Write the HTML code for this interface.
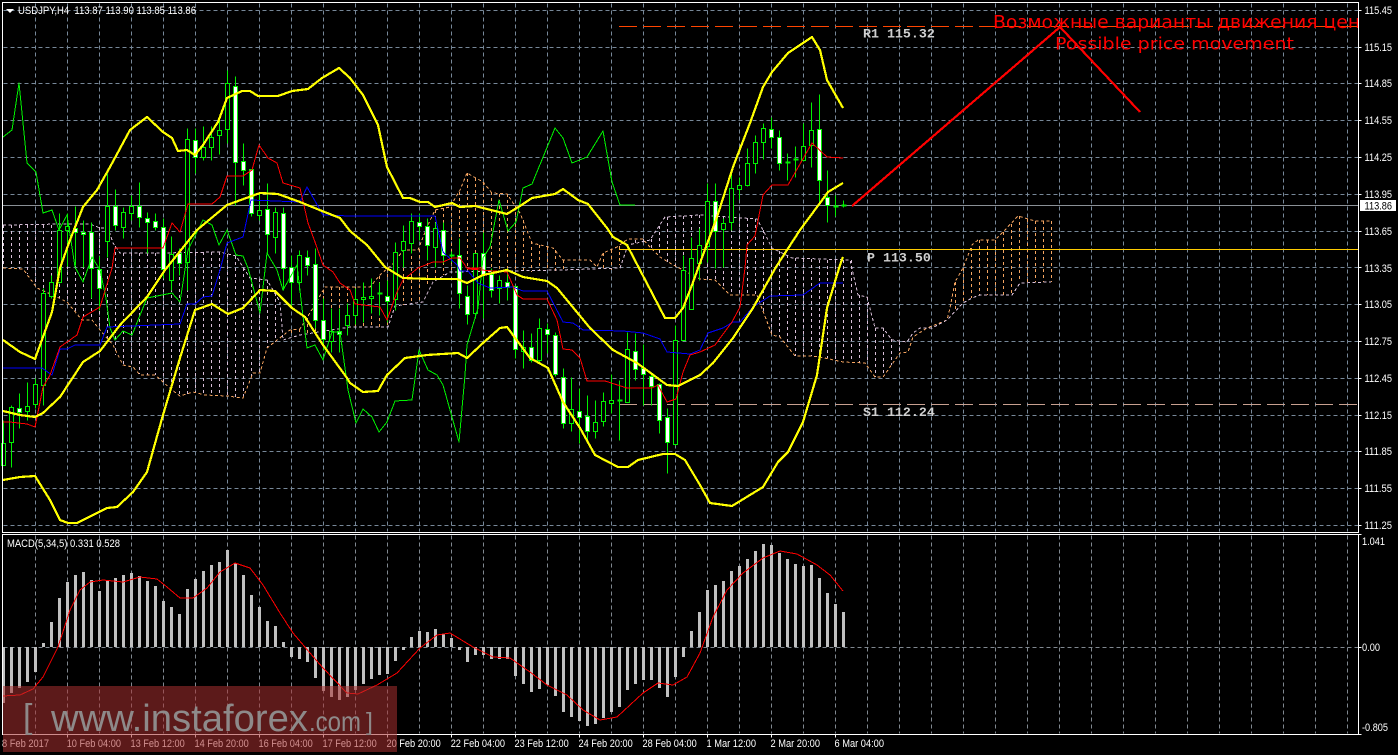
<!DOCTYPE html>
<html lang="ru"><head><meta charset="utf-8"><title>USDJPY,H4</title>
<style>
html,body{margin:0;padding:0;background:#000;width:1398px;height:755px;overflow:hidden}
svg{display:block;position:absolute;left:0;top:0}
text{font-family:"Liberation Sans","DejaVu Sans",sans-serif;font-size:11px;fill:#fff}
.m{font-family:"Liberation Mono",monospace;font-size:13.3px;font-weight:bold;fill:#d0d0d0}
.r{font-family:"DejaVu Sans","Liberation Sans",sans-serif;font-size:17px;fill:#f00}
.y{fill:none;stroke:#ff0;stroke-width:2.2;stroke-linejoin:round;shape-rendering:crispEdges}
.t{fill:none;stroke-width:1;stroke-linejoin:round;shape-rendering:crispEdges}
</style></head><body>
<svg width="1398" height="755" viewBox="0 0 1398 755" xmlns="http://www.w3.org/2000/svg">
<defs><clipPath id="c"><rect x="3" y="3" width="1355" height="529"/></clipPath></defs>
<rect width="1398" height="755" fill="#000"/>
<!-- grid -->
<g transform="translate(.5,.5)" shape-rendering="crispEdges" fill="none" stroke="#778899" stroke-dasharray="4 3">
<path d="M3 10H1358M3 47H1358M3 83H1358M3 120H1358M3 157H1358M3 194H1358M3 231H1358M3 267H1358M3 304H1358M3 341H1358M3 378H1358M3 415H1358M3 451H1358M3 488H1358M3 525H1358"/>
<path d="M35 3V531M67 3V531M99 3V531M131 3V531M163 3V531M195 3V531M227 3V531M259 3V531M291 3V531M323 3V531M355 3V531M387 3V531M419 3V531M451 3V531M483 3V531M515 3V531M547 3V531M579 3V531M611 3V531M643 3V531M675 3V531M707 3V531M739 3V531M771 3V531M803 3V531M835 3V531M867 3V531M899 3V531M931 3V531M963 3V531M995 3V531M1027 3V531M1059 3V531M1091 3V531M1123 3V531M1155 3V531M1187 3V531M1219 3V531M1251 3V531M1283 3V531M1315 3V531M1347 3V531"/>
<path stroke="#808890" d="M35 535V733M67 535V733M99 535V733M131 535V733M163 535V733M195 535V733M227 535V733M259 535V733M291 535V733M323 535V733M355 535V733M387 535V733M419 535V733M451 535V733M483 535V733M515 535V733M547 535V733M579 535V733M611 535V733M643 535V733M675 535V733M707 535V733M739 535V733M771 535V733M803 535V733M835 535V733M867 535V733M899 535V733M931 535V733M963 535V733M995 535V733M1027 535V733M1059 535V733M1091 535V733M1123 535V733M1155 535V733M1187 535V733M1219 535V733M1251 535V733M1283 535V733M1315 535V733M1347 535V733M3 647H1358"/>
</g>
<!-- kumo hatch -->
<g transform="translate(.5,0)" shape-rendering="crispEdges" fill="none" stroke-dasharray="3 3">
<path stroke="#d8bfd8" d="M3 225V268M11 225V268M19 225V269M27 225V274M35 225V285M43 225V291M51 225V294M59 224V298M67 224V302M75 224V312M83 224V320M91 224V320M99 227V329M107 228V339M115 246V355M123 253V365M131 253V367M139 253V374M147 253V375M155 253V375M163 253V382M171 253V389M179 253V395M187 253V394M195 253V392M203 252V394M211 252V395M219 252V396M227 254V396M235 256V397M243 268V398M251 278V378M259 279V373M267 280V348M275 293V342M635 243V239M643 241V239M651 239V248M659 226V256M667 217V262M675 216V267M683 216V271M691 215V275M699 215V279M707 216V280M715 216V280M723 217V288M731 217V295M739 218V295M747 218V295M755 219V295M763 230V312M771 246V333M779 251V337M787 255V344M795 258V356M803 259V356M811 259V356M819 260V357M827 260V358M835 260V360M843 260V362M851 260V362M859 295V363M867 297V363M875 328V377M883 328V377M891 339V365M899 342V354"/>
<path stroke="#f4a460" d="M291 330V335M299 329V335M307 318V333M315 304V331M323 290V330M331 287V328M339 287V328M347 287V327M355 287V327M363 287V327M371 286V327M379 276V327M387 268V327M395 262V306M403 250V305M411 250V303M419 249V302M427 227V287M435 210V278M443 208V275M451 207V272M459 192V272M467 173V272M475 178V272M483 182V272M491 192V272M499 194V272M507 194V272M515 206V272M523 220V272M531 241V272M539 245V271M547 247V271M555 250V271M563 260V270M603 253V270M611 250V270M619 246V265M955 282V311M963 268V303M971 248V298M979 240V295M987 240V295M995 240V295M1003 232V295M1011 224V295M1019 216V282M1027 219V282M1035 221V282M1043 221V282M1051 221V282"/>
</g>
<g fill="none" stroke-dasharray="3 2.5" stroke-width="1" shape-rendering="crispEdges">
<polyline stroke="#f4a460" points="3,268 23,269 37,288 57,297 67,302 82,320 92,320 100,330 113,345 123,365 133,367 140,375 155,375 172,390 180,396 193,392 205,395 227,396 243,398 253,373 260,373 267,348 290,330 300,329 313,308 325,287 370,287 380,275 395,262 403,250 418,250 428,225 435,210 450,207 460,190 467,173 483,182 492,193 507,194 520,213 532,243 553,248 563,260 590,260 597,267 603,253 617,247 628,239 643,239 650,247 660,257 668,262 700,279 715,280 730,295 757,295 772,335 780,337 795,356 812,356 820,357 843,362 865,363 875,377 883,377 900,353 908,352 913,337 927,328 947,320 950,308 955,282 963,268 972,245 978,240 995,240 1003,232 1018,216 1035,221 1051,221"/>
<polyline stroke="#d8bfd8" points="3,225 63,224 90,224 100,228 108,228 113,243 120,253 160,253 220,252 236,256 250,278 267,280 280,302 283,340 300,335 350,327 388,327 395,306 423,302 433,282 450,272 560,270 620,268 628,245 650,240 665,217 700,215 757,219 763,230 772,248 780,252 792,258 850,260 858,295 867,297 875,328 883,328 892,340 907,342 913,333 920,328 932,328 947,320 963,303 972,298 980,295 1012,295 1020,283 1051,282"/>
</g>
<!-- levels -->
<g shape-rendering="crispEdges" fill="none">
<path stroke="#ff4500" stroke-dasharray="18 6" d="M619 26.5H1358"/>
<path stroke="#ffcc00" d="M619 249.5H1358"/>
<path stroke="#c8a090" stroke-dasharray="18 6" d="M619 404.5H1358"/>
<path stroke="#8a9096" d="M3 205.5H1358"/>
</g>
<!-- candles -->
<g transform="translate(.5,.5)" shape-rendering="crispEdges" fill="none" stroke="#00f000">
<path d="M3 420V465M11 405V467M19 393V428M27 382V420M35 378V408M43 288V405M51 275V298M59 213V283M67 213V266M75 206V265M83 220V267M91 222V298M99 256V310M107 173V257M115 189V230M123 207V238M131 195V220M139 182V227M147 212V253M155 213V230M163 218V278M171 236V290M179 248V275M187 128V290M195 128V173M203 126V160M211 126V160M219 120V154M227 70V143M235 76V205M243 143V185M251 169V216M259 193V220M267 183V253M275 207V253M283 207V290M291 255V305M299 250V290M307 250V275M315 248V328M323 298V350M331 308V352M339 308V352M347 303V335M355 288V324M363 282V322M371 278V313M379 282V315M387 280V322M395 242V310M403 225V267M411 213V253M419 213V240M427 218V260M435 222V267M443 222V263M451 251V262M459 238V308M467 285V324M475 253V318M483 232V318M491 268V297M499 275V303M507 268V300M515 285V358M523 330V368M531 333V362M539 318V363M547 323V353M555 332V376M563 368V428M571 377V431M579 388V443M587 395V443M595 400V438M603 392V426M611 374V413M619 380V440M627 332V402M635 333V380M643 344V405M651 372V405M659 383V433M667 408V473M675 325V445M683 255V340M691 237V309M699 228V280M707 183V262M715 183V268M723 218V267M731 169V230M739 177V199M747 148V186M755 135V173M763 123V159M771 117V148M779 130V170M787 153V180M795 146V177M803 123V161M811 102V167M819 94V205M827 170V222M835 195V216M843 200V207"/>
<path stroke-width="2" d="M377 293h5M449 255h5M617 400h5M785 162h5M793 159h5M833 206h5M841 205h5"/>
<path fill="#000" d="M1 443h4V465h-4zM9 407h4V442h-4zM25 406h4V411h-4zM33 384h4V404h-4zM41 293h4V385h-4zM49 282h4V296h-4zM57 230h4V282h-4zM65 226h4V230h-4zM105 206h4V241h-4zM121 212h4V227h-4zM129 206h4V213h-4zM169 254h4V280h-4zM185 139h4V262h-4zM201 147h4V157h-4zM209 137h4V147h-4zM217 130h4V135h-4zM225 83h4V129h-4zM257 210h4V215h-4zM273 212h4V237h-4zM297 255h4V282h-4zM329 331h4V341h-4zM345 315h4V325h-4zM353 299h4V315h-4zM361 297h4V299h-4zM369 296h4V298h-4zM393 252h4V299h-4zM401 241h4V250h-4zM409 221h4V243h-4zM433 228h4V247h-4zM473 253h4V313h-4zM497 280h4V288h-4zM521 347h4V351h-4zM537 328h4V360h-4zM569 409h4V423h-4zM593 422h4V431h-4zM601 401h4V421h-4zM609 400h4V403h-4zM625 349h4V402h-4zM673 340h4V444h-4zM681 270h4V340h-4zM689 258h4V309h-4zM697 245h4V263h-4zM705 201h4V246h-4zM721 223h4V229h-4zM729 188h4V222h-4zM737 185h4V189h-4zM745 163h4V185h-4zM753 142h4V163h-4zM761 128h4V142h-4zM801 146h4V160h-4zM809 130h4V145h-4z"/>
<path fill="#fff" d="M17 408h4V412h-4zM73 228h4V232h-4zM81 232h4V234h-4zM89 232h4V268h-4zM97 269h4V288h-4zM113 206h4V225h-4zM137 206h4V217h-4zM145 218h4V222h-4zM153 221h4V227h-4zM161 227h4V269h-4zM177 253h4V263h-4zM193 140h4V157h-4zM233 86h4V162h-4zM241 161h4V170h-4zM249 169h4V213h-4zM265 209h4V234h-4zM281 213h4V268h-4zM289 267h4V282h-4zM305 257h4V265h-4zM313 264h4V320h-4zM321 320h4V339h-4zM337 331h4V334h-4zM385 296h4V301h-4zM417 222h4V226h-4zM425 226h4V245h-4zM441 230h4V255h-4zM457 255h4V293h-4zM465 296h4V314h-4zM481 253h4V274h-4zM489 274h4V290h-4zM505 282h4V287h-4zM513 286h4V349h-4zM529 347h4V360h-4zM545 329h4V334h-4zM553 335h4V374h-4zM561 377h4V423h-4zM577 411h4V417h-4zM585 416h4V431h-4zM633 351h4V369h-4zM641 368h4V374h-4zM649 376h4V386h-4zM657 384h4V420h-4zM665 417h4V442h-4zM713 201h4V231h-4zM769 129h4V137h-4zM777 137h4V163h-4zM817 129h4V180h-4zM825 197h4V205h-4z"/>
</g>
<!-- chikou -->
<polyline class="t" stroke="#00f000" points="3,137 12,130 19,83 27,163 36,172 43,213 52,210 59,230 67,215 75,267 83,282 92,257 100,270 106,298 110,328 115,340 123,331 132,335 147,298 172,293 180,302 188,250 203,220 212,225 219,245 227,230 236,255 243,256 248,268 260,313 267,253 277,270 283,290 297,265 302,308 307,348 315,345 323,360 332,332 340,332 348,390 356,423 363,409 372,417 379,432 387,422 395,401 412,400 419,350 428,370 437,375 443,385 459,442 465,375 467,345 478,308 483,258 490,247 499,200 508,231 516,222 523,188 532,184 555,128 563,138 572,163 587,157 603,131 612,182 620,205 635,205"/>
<!-- kijun -->
<polyline class="t" stroke="#0000ff" points="3,368 42,368 52,375 60,349 67,349 75,345 100,345 107,327 180,324 187,304 195,304 203,297 212,296 220,270 227,243 243,237 251,200 300,202 307,187 323,215 350,216 435,216 443,252 457,265 460,271 468,271 478,283 490,288 513,287 523,291 547,291 563,322 573,323 583,330 623,331 643,333 660,339 667,352 690,354 700,350 708,333 723,328 733,322 740,322 753,307 770,296 803,295 820,283 843,283"/>
<!-- tenkan -->
<polyline class="t" stroke="#ff0000" points="3,422 10,422 27,424 35,427 43,387 50,375 60,347 77,335 83,317 100,307 112,268 115,248 163,248 172,223 180,232 188,204 212,204 220,197 227,176 243,176 252,170 259,145 268,158 277,163 283,183 300,188 308,223 315,242 323,265 333,272 340,283 350,290 355,304 380,307 387,320 397,292 403,280 418,268 433,262 443,262 452,258 460,258 467,268 482,268 468,269 507,272 517,295 523,299 547,299 557,320 563,349 572,350 580,358 587,381 605,381 627,388 652,388 658,385 667,402 676,399 683,372 690,355 700,352 715,345 732,322 740,307 745,268 747,245 755,236 763,195 772,185 788,185 812,143 827,157 843,158"/>
<!-- bollinger -->
<polyline class="y" points="3,340 20,352 35,359 52,312 60,268 70,240 83,207 97,190 110,167 130,130 147,117 163,132 172,138 178,151 187,150 195,155 203,145 218,122 227,98 242,91 250,91 258,96 278,96 292,91 308,89 322,78 339,68 350,78 363,95 378,125 387,167 403,198 410,198 420,202 428,202 435,207 452,203 460,207 475,206 507,214 520,206 532,198 555,194 563,189 578,200 588,204 607,228 613,237 627,245 640,270 665,318 675,318 683,308 692,285 700,263 717,217 733,167 750,123 763,87 772,72 788,53 812,37 820,50 827,80 843,108"/>
<polyline class="y" points="3,411 20,415 35,417 43,413 60,397 83,362 100,351 120,325 147,297 165,270 197,230 227,205 260,193 278,194 300,202 322,211 340,218 350,231 367,245 385,267 403,278 430,279 457,279 467,283 483,275 507,270 523,277 547,281 557,288 590,328 613,350 637,363 667,385 678,386 700,375 713,363 733,338 753,308 776,267 800,230 820,203 828,192 843,183"/>
<polyline class="y" points="3,480 20,477 35,476 50,500 60,520 68,523 77,523 87,518 107,508 117,507 133,492 147,472 163,415 180,358 195,310 212,304 228,314 243,308 260,290 275,291 292,308 305,317 323,345 347,378 350,383 363,392 378,391 387,375 405,358 427,355 458,353 467,358 483,343 500,328 507,327 530,358 548,368 563,402 580,428 595,455 618,467 628,467 638,460 663,454 675,454 685,460 700,485 710,503 732,506 763,487 778,462 788,452 803,422 817,375 827,308 840,265 843,257"/>
<!-- macd bars -->
<path transform="translate(.5,0)" fill="none" stroke="#c0c0c0" stroke-width="3" shape-rendering="crispEdges" d="M3 647V703M11 647V693M19 647V688M27 647V682M35 647V672M43 647V643M51 647V622M59 647V598M67 647V582M75 647V575M83 647V572M91 647V580M99 647V591M107 647V581M115 647V578M123 647V575M131 647V573M139 647V576M147 647V581M155 647V586M163 647V601M171 647V607M179 647V614M187 647V589M195 647V579M203 647V571M211 647V565M219 647V562M227 647V550M235 647V563M243 647V575M251 647V595M259 647V607M267 647V621M275 647V626M283 647V642M291 647V657M299 647V659M307 647V662M315 647V678M323 647V691M331 647V697M339 647V700M347 647V697M355 647V690M363 647V684M371 647V679M379 647V675M387 647V674M395 647V661M403 647V650M411 647V637M419 647V631M427 647V632M435 647V629M443 647V634M451 647V638M459 647V650M467 647V662M475 647V655M483 647V655M491 647V659M499 647V659M507 647V659M515 647V676M523 647V684M531 647V692M539 647V689M547 647V685M555 647V696M563 647V712M571 647V717M579 647V721M587 647V726M595 647V724M603 647V718M611 647V712M619 647V707M627 647V690M635 647V684M643 647V680M651 647V680M659 647V688M667 647V697M675 647V677M683 647V657M691 647V631M699 647V612M707 647V590M715 647V585M723 647V581M731 647V571M739 647V566M747 647V559M755 647V551M763 647V544M771 647V545M779 647V553M787 647V559M795 647V564M803 647V566M811 647V565M819 647V578M827 647V593M835 647V604M843 647V612"/>
<polyline class="t" stroke="#ff0000" points="3,696 20,695 33,689 43,677 58,647 70,610 80,590 90,582 103,580 123,582 140,577 157,579 167,587 180,598 193,598 207,588 220,572 235,563 250,568 263,585 280,613 293,633 310,653 323,668 347,693 358,694 377,685 397,673 420,648 437,635 450,633 473,647 493,657 510,658 530,672 547,685 567,695 583,710 600,720 617,717 643,693 658,683 673,685 687,677 700,653 713,617 727,590 743,573 763,558 780,551 797,554 817,565 830,575 843,591"/>
<!-- frames -->
<g transform="translate(.5,.5)" shape-rendering="crispEdges" fill="none" stroke="#fff">
<path d="M2 2H1358V532H2zM2 534H1358V734H2z"/>
<path d="M1358 10h3M1358 47h3M1358 83h3M1358 120h3M1358 157h3M1358 194h3M1358 231h3M1358 267h3M1358 304h3M1358 341h3M1358 378h3M1358 415h3M1358 451h3M1358 488h3M1358 525h3M1358 534h3M1358 647h3M1358 734h3M67 734v3M131 734v3M195 734v3M259 734v3M323 734v3M387 734v3M451 734v3M515 734v3M579 734v3M643 734v3M707 734v3M771 734v3M835 734v3"/>
</g>
<!-- title -->
<path d="M6 9h8l-4 4z" fill="#fff"/>
<text x="18" y="14" textLength="178" lengthAdjust="spacingAndGlyphs" xml:space="preserve">USDJPY,H4  113.87 113.90 113.85 113.86</text>
<text x="7" y="547" textLength="113" lengthAdjust="spacingAndGlyphs">MACD(5,34,5) 0.331 0.528</text>
<!-- price axis -->
<g>
<text x="1364.5" y="14" textLength="27.5" lengthAdjust="spacingAndGlyphs">115.45</text>
<text x="1364.5" y="51" textLength="27.5" lengthAdjust="spacingAndGlyphs">115.15</text>
<text x="1364.5" y="87" textLength="27.5" lengthAdjust="spacingAndGlyphs">114.85</text>
<text x="1364.5" y="124" textLength="27.5" lengthAdjust="spacingAndGlyphs">114.55</text>
<text x="1364.5" y="161" textLength="27.5" lengthAdjust="spacingAndGlyphs">114.25</text>
<text x="1364.5" y="198" textLength="27.5" lengthAdjust="spacingAndGlyphs">113.95</text>
<text x="1364.5" y="235" textLength="27.5" lengthAdjust="spacingAndGlyphs">113.65</text>
<text x="1364.5" y="272" textLength="27.5" lengthAdjust="spacingAndGlyphs">113.35</text>
<text x="1364.5" y="308" textLength="27.5" lengthAdjust="spacingAndGlyphs">113.05</text>
<text x="1364.5" y="345" textLength="27.5" lengthAdjust="spacingAndGlyphs">112.75</text>
<text x="1364.5" y="382" textLength="27.5" lengthAdjust="spacingAndGlyphs">112.45</text>
<text x="1364.5" y="419" textLength="27.5" lengthAdjust="spacingAndGlyphs">112.15</text>
<text x="1364.5" y="455" textLength="27.5" lengthAdjust="spacingAndGlyphs">111.85</text>
<text x="1364.5" y="492" textLength="27.5" lengthAdjust="spacingAndGlyphs">111.55</text>
<text x="1364.5" y="529" textLength="27.5" lengthAdjust="spacingAndGlyphs">111.25</text>
<rect x="1360" y="200" width="36" height="11" fill="#fff"/>
<text x="1364.5" y="209.5" textLength="27.5" lengthAdjust="spacingAndGlyphs" style="fill:#000">113.86</text>
<text x="1362" y="545" textLength="23" lengthAdjust="spacingAndGlyphs">1.041</text>
<text x="1362" y="651" textLength="18" lengthAdjust="spacingAndGlyphs">0.00</text>
<text x="1362" y="731" textLength="26" lengthAdjust="spacingAndGlyphs">-0.805</text>
</g>
<!-- time axis -->
<g>
<text x="2" y="747" textLength="47" lengthAdjust="spacingAndGlyphs">8 Feb 2017</text>
<text x="66.7" y="747" textLength="54.3" lengthAdjust="spacingAndGlyphs">10 Feb 04:00</text>
<text x="130.5" y="747" textLength="54.3" lengthAdjust="spacingAndGlyphs">13 Feb 12:00</text>
<text x="194.5" y="747" textLength="54.3" lengthAdjust="spacingAndGlyphs">14 Feb 20:00</text>
<text x="258.5" y="747" textLength="54.3" lengthAdjust="spacingAndGlyphs">16 Feb 04:00</text>
<text x="322.5" y="747" textLength="54.3" lengthAdjust="spacingAndGlyphs">17 Feb 12:00</text>
<text x="386.5" y="747" textLength="54.3" lengthAdjust="spacingAndGlyphs">20 Feb 20:00</text>
<text x="450.7" y="747" textLength="54.3" lengthAdjust="spacingAndGlyphs">22 Feb 04:00</text>
<text x="514.5" y="747" textLength="54.3" lengthAdjust="spacingAndGlyphs">23 Feb 12:00</text>
<text x="578.5" y="747" textLength="54.3" lengthAdjust="spacingAndGlyphs">24 Feb 20:00</text>
<text x="642.5" y="747" textLength="54.3" lengthAdjust="spacingAndGlyphs">28 Feb 04:00</text>
<text x="706.5" y="747" textLength="49.5" lengthAdjust="spacingAndGlyphs">1 Mar 12:00</text>
<text x="770.5" y="747" textLength="49.5" lengthAdjust="spacingAndGlyphs">2 Mar 20:00</text>
<text x="834.5" y="747" textLength="49.5" lengthAdjust="spacingAndGlyphs">6 Mar 04:00</text>
</g>
<!-- annotations -->
<text class="m" x="863" y="37.5">R1 115.32</text>
<text class="m" x="867" y="261.5">P 113.50</text>
<text class="m" x="863" y="416">S1 112.24</text>
<polyline fill="none" stroke="#f00" stroke-width="2.2" shape-rendering="crispEdges" points="852,206 1060,27 1140,112"/>
<g clip-path="url(#c)">
<text class="r" x="993" y="28" textLength="382" lengthAdjust="spacingAndGlyphs" style="font-size:18px">Возможные варианты движения цены</text>
<text class="r" x="1055" y="49.5" textLength="239" lengthAdjust="spacingAndGlyphs">Possible price movement</text>
</g>
<!-- watermark -->
<rect x="3" y="686" width="394" height="66" fill="#a82f30" fill-opacity=".55"/>
<text x="23" y="728" style="font-size:34px;fill:#8e8888">[</text>
<text x="51" y="731" textLength="257" lengthAdjust="spacingAndGlyphs" style="font-size:38px;fill:#8e8a8a">www.instaforex</text>
<text x="309" y="731" textLength="52" lengthAdjust="spacingAndGlyphs" style="font-size:28px;fill:#8e8a8a">.com</text>
<text x="366" y="730" style="font-size:25px;fill:#8e8888">]</text>
</svg>
</body></html>
